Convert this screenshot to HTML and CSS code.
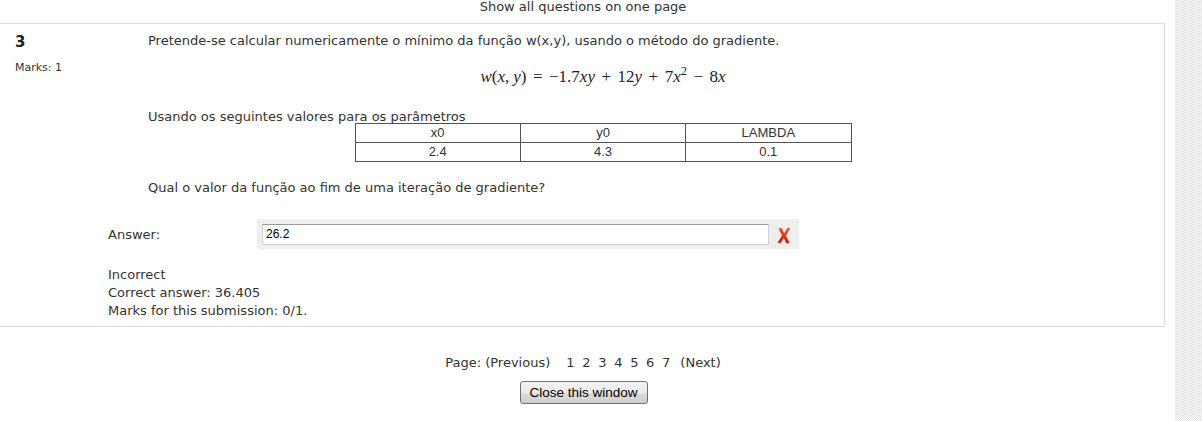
FILE: index.html
```
<!DOCTYPE html>
<html>
<head>
<meta charset="utf-8">
<link rel="stylesheet" href="styles.css">
</head>
<body>
<div class="page">
  <main class="main">
    <div class="showall">Show all questions on one page</div>
    <div class="que">
      <div class="info">
        <div class="qno">3</div>
        <div class="grade">Marks: 1</div>
      </div>
      <div class="content">
        <div class="qtext">
          <p class="line">Pretende-se calcular numericamente o mínimo da função w(x,y), usando o método do gradiente.</p>
          <div class="math"><i>w</i>(<i>x</i>,<span class="thin"></span><i>y</i>)<span class="op">=</span>−1.7<i>xy</i><span class="op">+</span>12<i>y</i><span class="op">+</span>7<i>x</i><sup>2</sup><span class="op">−</span>8<i>x</i></div>
          <p class="line intro">Usando os seguintes valores para os parâmetros</p>
          <table class="params">
            <tr><td>x0</td><td>y0</td><td>LAMBDA</td></tr>
            <tr><td>2.4</td><td>4.3</td><td>0.1</td></tr>
          </table>
          <p class="line ask">Qual o valor da função ao fim de uma iteração de gradiente?</p>
        </div>
        <div class="ablock">
          <div class="prompt">Answer:</div>
          <div class="answer">
            <div class="input">26.2</div>
            <svg class="xicon" width="14" height="17" viewBox="0 0 14 17">
              <defs><linearGradient id="g" x1="0" y1="0" x2="0" y2="1"><stop offset="0" stop-color="#f2552a"/><stop offset="1" stop-color="#c91a08"/></linearGradient></defs>
              <path d="M1.5 1.5 L4.6 1 L7.2 6.3 L10.6 0.8 L13.2 1.6 L8.9 8.4 L12.6 15.8 L9.4 16.4 L6.8 11.2 L3.6 16.3 L0.6 15.6 L5 8.6 Z" fill="url(#g)"/>
            </svg>
          </div>
        </div>
        <div class="feedback">
          <div>Incorrect</div>
          <div>Correct answer: 36.405</div>
          <div>Marks for this submission: 0/1.</div>
        </div>
      </div>
    </div>
    <div class="paging">Page: (Previous)<span class="nums"><span class="pn">1</span><span class="pn">2</span><span class="pn">3</span><span class="pn">4</span><span class="pn">5</span><span class="pn">6</span><span class="pn">7</span></span>(Next)</div>
    <div class="btnrow"><button class="close">Close this window</button></div>
  </main>
  <aside class="strip"></aside>
</div>
</body>
</html>
```
FILE: styles.css
```
html, body { margin: 0; padding: 0; }
body {
  font-family: "DejaVu Sans", Verdana, sans-serif;
  font-size: 13px;
  color: #333;
  background: #fff;
  width: 1202px;
  height: 421px;
  overflow: hidden;
}
.page {
  display: grid;
  grid-template-columns: 1175px 27px;
  height: 421px;
}
.strip {
  background: repeating-conic-gradient(#e2e2e2 0 25%, #fafafa 0 50%) 0 0 / 2px 2px;
}
.main { display: flex; flex-direction: column; }
.showall {
  text-align: center;
  height: 23px;
  line-height: 14px;
  width: 1166px;
}
.que {
  width: 1165px;
  border: 1px solid #dcdcdc;
  border-left: 0;
  display: grid;
  grid-template-columns: 108px 1fr;
  padding: 8px 66px 5px 0;
  box-sizing: border-box;
  height: 304px;
}
.info { padding-left: 15px; }
.qno { font-size: 15px; font-weight: bold; color: #222; line-height: 20px; }
.grade { font-size: 11px; margin-top: 9px; }
.qtext { margin: 0 40px; }
.line { margin: 0; line-height: 18px; }
.math {
  font-family: "Liberation Serif", "Times New Roman", serif;
  font-size: 17px;
  text-align: center;
  color: #222;
  margin: 17px 0 22px;
  line-height: 20px;
}
.math i { font-style: italic; }
.math .thin { display: inline-block; width: 4px; }
.math .op { display: inline-block; margin: 0 6.5px; }
.math sup { font-size: 12.5px; line-height: 0; }
.intro { line-height: 15px; }
.params {
  border-collapse: collapse;
  width: 497px;
  margin: -1px auto 0;
  font-family: "Liberation Sans", Arial, sans-serif;
  font-size: 13px;
}
.params td {
  border: 1px solid #555;
  text-align: center;
  width: 33.3%;
  height: 18px;
  padding: 0;
  line-height: 16px;
}
.ask { margin-top: 17px; }
.ablock {
  display: flex;
  align-items: center;
  margin-top: 22px;
}
.prompt { width: 149px; }
.answer {
  background: #eee;
  width: 542px;
  height: 30px;
  display: flex;
  align-items: center;
  padding-left: 5px;
  box-sizing: border-box;
  gap: 8px;
}
.input {
  width: 507px;
  height: 21px;
  box-sizing: border-box;
  background: #fff;
  border: 1px solid #d0d0d0;
  border-top-color: #9a9a9a;
  font-family: "Liberation Sans", Arial, sans-serif;
  font-size: 12px;
  color: #000;
  line-height: 19px;
  padding-left: 3px;
}
.xicon { display: block; margin-top: 2px; }
.feedback {
  margin-top: 17px;
  line-height: 18px;
}
.paging {
  width: 1166px;
  text-align: center;
  margin-top: 28px;
  font-size: 13px;
  line-height: 16px;
}
.nums { margin-left: 16px; }
.pn { display: inline-block; margin-right: 7.7px; }
.pn:last-child { margin-right: 10px; }
.btnrow { width: 1166px; text-align: center; margin-top: 10px; }
.close {
  font-family: "Liberation Sans", Arial, sans-serif;
  font-size: 13.5px;
  color: #000;
  height: 23px;
  width: 128px;
  padding: 0;
  border: 1px solid #707070;
  border-radius: 3px;
  background: linear-gradient(#f2f2f2, #ebebeb 50%, #dddddd 51%, #cfcfcf);
  margin-left: 1px;
}
```
